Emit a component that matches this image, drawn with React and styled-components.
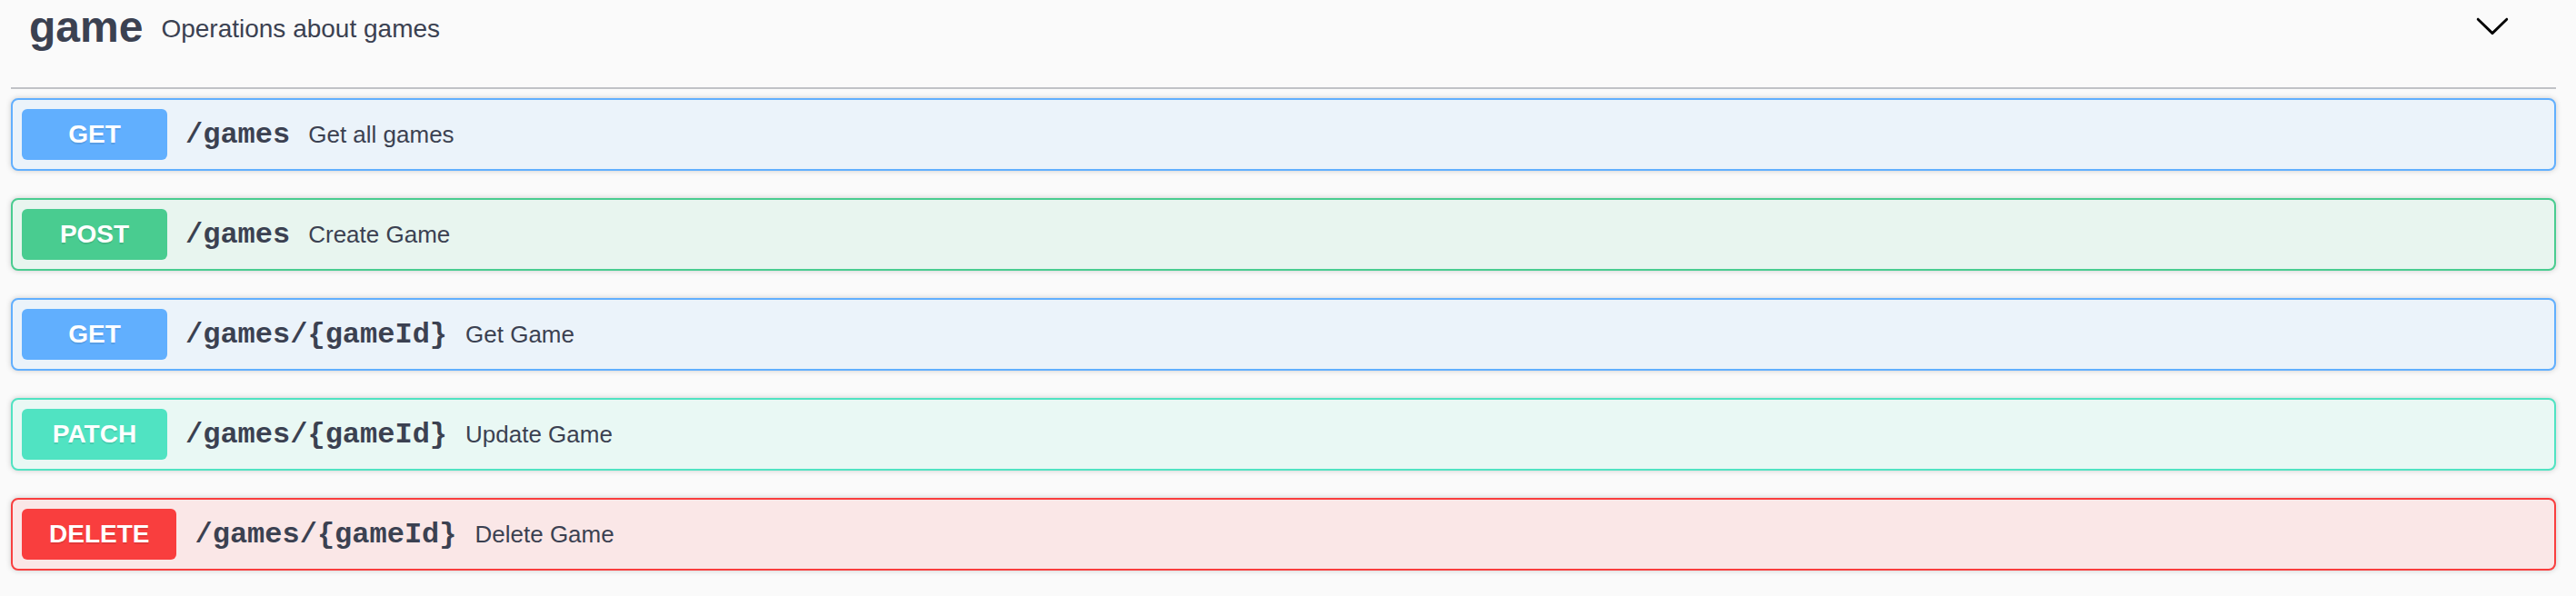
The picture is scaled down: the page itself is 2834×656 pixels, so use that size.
import React from 'react';
import styled, { createGlobalStyle } from 'styled-components';

const GlobalStyle = createGlobalStyle`
     html, body {
          margin:0;
          padding:0;
          background:#fafafa;
     }
     body {
          font-family: 'Liberation Sans', Arial, sans-serif;
          color:#3b4151;
          overflow:hidden;
     }
`

// colours per http method (border / badge, and the tinted block background)
const methods = {
     get: { main: '#61affe', tint: '#ebf3fa' },
     post: { main: '#49cc90', tint: '#e8f5ef' },
     patch: { main: '#50e3c2', tint: '#e9f8f4' },
     delete: { main: '#f93e3e', tint: '#fae7e7' },
}

const Page = styled.div`
     min-height:656px;
     padding:0 22px 0 12px;
     background:#fafafa;
`

const TagHeader = styled.h3`
     display:flex;
     align-items:center;
     margin:0 0 10px;
     padding:2px 40px 39px 20px;
     border-bottom:2px solid rgba(59,65,81,.3);
     font-size:48px;
     font-weight:700;
     color:#3b4151;
`

const TagName = styled.span`
     line-height:1.149;
`

const TagDescription = styled.small`
     flex:1;
     padding:5px 20px 0;
     font-size:28px;
     font-weight:400;
`

const ExpandButton = styled.button`
     display:flex;
     align-items:center;
     padding:0 10px;
     margin-top:-4px;
     border:none;
     background:none;
     color:#000;
`

const OpBlock = styled.div`
     margin:0 0 30px;
     border:2px solid ${p => methods[p.$method].main};
     border-radius:8px;
     background:${p => methods[p.$method].tint};
     box-shadow:0 0 6px rgba(0,0,0,.19);
`

const Summary = styled.div`
     display:flex;
     align-items:center;
     padding:10px;
`

const Method = styled.span`
     min-width:160px;
     padding:12px 30px;
     box-sizing:border-box;
     border-radius:6px;
     background:${p => methods[p.$method].main};
     color:#fff;
     font-size:28px;
     font-weight:700;
     line-height:32px;
     text-align:center;
     text-shadow:0 2px 0 rgba(0,0,0,.1);
`

const Path = styled.span`
     padding:0 20px;
     font-family:'Liberation Mono', 'DejaVu Sans Mono', monospace;
     font-size:32px;
     font-weight:700;
     color:#3b4151;
`

const Description = styled.div`
     flex:1;
     font-size:26px;
     color:#3b4151;
`

const ops = [
     { method: 'get', path: '/games', summary: 'Get all games' },
     { method: 'post', path: '/games', summary: 'Create Game' },
     { method: 'get', path: '/games/{gameId}', summary: 'Get Game' },
     { method: 'patch', path: '/games/{gameId}', summary: 'Update Game' },
     { method: 'delete', path: '/games/{gameId}', summary: 'Delete Game' },
]

const Arrow = () => (
     <svg width="40" height="40" viewBox="0 0 20 20" aria-hidden="true">
          <path fill="currentColor" d="M17.418 6.109c.272-.268.709-.268.979 0s.271.701 0 .969l-7.908 7.83c-.27.268-.707.268-.979 0l-7.908-7.83c-.27-.268-.27-.701 0-.969.271-.268.709-.268.979 0L10 13.25l7.418-7.141z" />
     </svg>
)

const App = () => {
     return (
          <Page>
               <GlobalStyle />
               <TagHeader>
                    <TagName>game</TagName>
                    <TagDescription>Operations about games</TagDescription>
                    <ExpandButton aria-label="collapse">
                         <Arrow />
                    </ExpandButton>
               </TagHeader>
               {ops.map((op, i) => (
                    <OpBlock key={i} $method={op.method}>
                         <Summary>
                              <Method $method={op.method}>{op.method.toUpperCase()}</Method>
                              <Path>{op.path}</Path>
                              <Description>{op.summary}</Description>
                         </Summary>
                    </OpBlock>
               ))}
          </Page>
     )
}

export default App
